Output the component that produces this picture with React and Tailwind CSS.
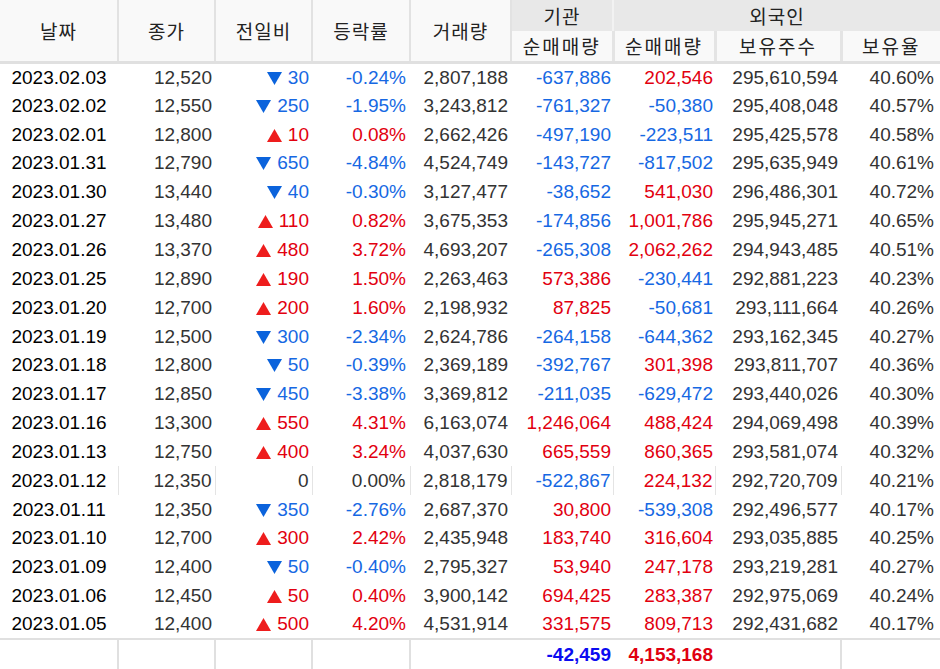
import React from "react";

const rows = [
  ["2023.02.03", "12,520", -30, "-0.24%", "2,807,188", "-637,886", "202,546", "295,610,594", "40.60%"],
  ["2023.02.02", "12,550", -250, "-1.95%", "3,243,812", "-761,327", "-50,380", "295,408,048", "40.57%"],
  ["2023.02.01", "12,800", 10, "0.08%", "2,662,426", "-497,190", "-223,511", "295,425,578", "40.58%"],
  ["2023.01.31", "12,790", -650, "-4.84%", "4,524,749", "-143,727", "-817,502", "295,635,949", "40.61%"],
  ["2023.01.30", "13,440", -40, "-0.30%", "3,127,477", "-38,652", "541,030", "296,486,301", "40.72%"],
  ["2023.01.27", "13,480", 110, "0.82%", "3,675,353", "-174,856", "1,001,786", "295,945,271", "40.65%"],
  ["2023.01.26", "13,370", 480, "3.72%", "4,693,207", "-265,308", "2,062,262", "294,943,485", "40.51%"],
  ["2023.01.25", "12,890", 190, "1.50%", "2,263,463", "573,386", "-230,441", "292,881,223", "40.23%"],
  ["2023.01.20", "12,700", 200, "1.60%", "2,198,932", "87,825", "-50,681", "293,111,664", "40.26%"],
  ["2023.01.19", "12,500", -300, "-2.34%", "2,624,786", "-264,158", "-644,362", "293,162,345", "40.27%"],
  ["2023.01.18", "12,800", -50, "-0.39%", "2,369,189", "-392,767", "301,398", "293,811,707", "40.36%"],
  ["2023.01.17", "12,850", -450, "-3.38%", "3,369,812", "-211,035", "-629,472", "293,440,026", "40.30%"],
  ["2023.01.16", "13,300", 550, "4.31%", "6,163,074", "1,246,064", "488,424", "294,069,498", "40.39%"],
  ["2023.01.13", "12,750", 400, "3.24%", "4,037,630", "665,559", "860,365", "293,581,074", "40.32%"],
  ["2023.01.12", "12,350", 0, "0.00%", "2,818,179", "-522,867", "224,132", "292,720,709", "40.21%"],
  ["2023.01.11", "12,350", -350, "-2.76%", "2,687,370", "30,800", "-539,308", "292,496,577", "40.17%"],
  ["2023.01.10", "12,700", 300, "2.42%", "2,435,948", "183,740", "316,604", "293,035,885", "40.25%"],
  ["2023.01.09", "12,400", -50, "-0.40%", "2,795,327", "53,940", "247,178", "293,219,281", "40.27%"],
  ["2023.01.06", "12,450", 50, "0.40%", "3,900,142", "694,425", "283,387", "292,975,069", "40.24%"],
  ["2023.01.05", "12,400", 500, "4.20%", "4,531,914", "331,575", "809,713", "292,431,682", "40.17%"],
];

const widths = [118, 97, 97, 98, 101, 102, 102, 126, 99];

const tone = (v) => (v.startsWith("-") ? "text-[#1668e3]" : "text-[#e2000f]");

function Arrow({ up }) {
  return (
    <svg width="15" height="13" viewBox="0 0 15 13" className="inline-block mr-[6px] align-[-1px]">
      {up ? (
        <polygon points="7.5,0 15,13 0,13" fill="#ee1d1d" />
      ) : (
        <polygon points="0,0 15,0 7.5,13" fill="#0b63dc" />
      )}
    </svg>
  );
}

function Change({ v }) {
  if (v === 0) return <span className="text-[#333]">0</span>;
  const up = v > 0;
  return (
    <span className={up ? "text-[#e2000f]" : "text-[#1668e3]"}>
      <Arrow up={up} />
      {Math.abs(v)}
    </span>
  );
}

const th = "font-normal text-[19px] leading-none text-[#222] text-center";

export default function App() {
  return (
    <div className="w-[940px] h-[669px] overflow-hidden bg-white font-['Liberation_Sans',Arial,sans-serif]">
      <table className="w-[940px] table-fixed border-collapse">
        <colgroup>
          {widths.map((w, i) => (
            <col key={i} style={{ width: w }} />
          ))}
        </colgroup>
        <thead className="font-['Noto_Sans_CJK_KR',sans-serif]">
          <tr className="h-[31px]">
            {["날짜", "종가", "전일비", "등락률", "거래량"].map((t) => (
              <th
                key={t}
                rowSpan={2}
                className={`${th} tracking-[1px] bg-[#f9f9f9] border-r-2 border-b-[3px] border-r-[#e2e2e2] border-b-[#e0e0e0] pt-[1px]`}
              >
                {t}
              </th>
            ))}
            <th className={`${th} tracking-[1px] bg-[#e8e8e8] border-r-2 border-[#f2f2f2]`}>기관</th>
            <th colSpan={3} className={`${th} tracking-[1px] bg-[#e8e8e8]`}>
              외국인
            </th>
          </tr>
          <tr className="h-[31px]">
            {["순매매량", "순매매량", "보유주수", "보유율"].map((t, i) => (
              <th
                key={i}
                className={`${th} tracking-[2px] bg-[#f9f9f9] border-b-[3px] border-b-[#e0e0e0] ${
                  i < 3 ? "border-r-[3px] border-r-[#e4e4e4]" : ""
                }`}
              >
                {t}
              </th>
            ))}
          </tr>
        </thead>
        <tbody className="text-[19px] leading-none">
          {rows.map((r) => {
            const hover = r[0] === "2023.01.12";
            const td = `h-[28.85px] p-0 ${hover ? "border-r border-[#e4e4e4]" : ""}`;
            return (
              <tr key={r[0]}>
                <td className={`${td} text-center text-black`}>{r[0]}</td>
                <td className={`${td} text-right pr-[3px] text-[#333]`}>{r[1]}</td>
                <td className={`${td} text-right pr-[3px]`}>
                  <Change v={r[2]} />
                </td>
                <td
                  className={`${td} text-right pr-[4px] ${
                    r[2] === 0 ? "text-[#333]" : r[2] > 0 ? "text-[#e2000f]" : "text-[#1668e3]"
                  }`}
                >
                  {r[3]}
                </td>
                <td className={`${td} text-right pr-[3px] text-[#333]`}>{r[4]}</td>
                <td className={`${td} text-right pr-[2px] ${tone(r[5])}`}>{r[5]}</td>
                <td className={`${td} text-right pr-[2px] ${tone(r[6])}`}>{r[6]}</td>
                <td className={`${td} text-right pr-[3px] text-[#333]`}>{r[7]}</td>
                <td className="h-[28.85px] p-0 text-right pr-[6px] text-[#333]">{r[8]}</td>
              </tr>
            );
          })}
        </tbody>
        <tfoot className="text-[19px] leading-none font-bold">
          <tr className="h-[31px] border-t-2 border-[#e0e0e0]">
            <td className="border-r-2 border-b-2 border-[#e0e0e0]" />
            <td className="border-r-2 border-b-2 border-[#e0e0e0]" />
            <td className="border-r-2 border-b-2 border-[#e0e0e0]" />
            <td className="border-r-2 border-b-2 border-[#e0e0e0]" />
            <td className="border-b-2 border-[#e0e0e0]" />
            <td className="text-right pr-[2px] text-[#0b0bf0]">-42,459</td>
            <td className="text-right pr-[2px] text-[#e00010]">4,153,168</td>
            <td className="border-r-2 border-b-2 border-[#e0e0e0]" />
            <td className="border-b-2 border-[#e0e0e0]" />
          </tr>
        </tfoot>
      </table>
    </div>
  );
}
